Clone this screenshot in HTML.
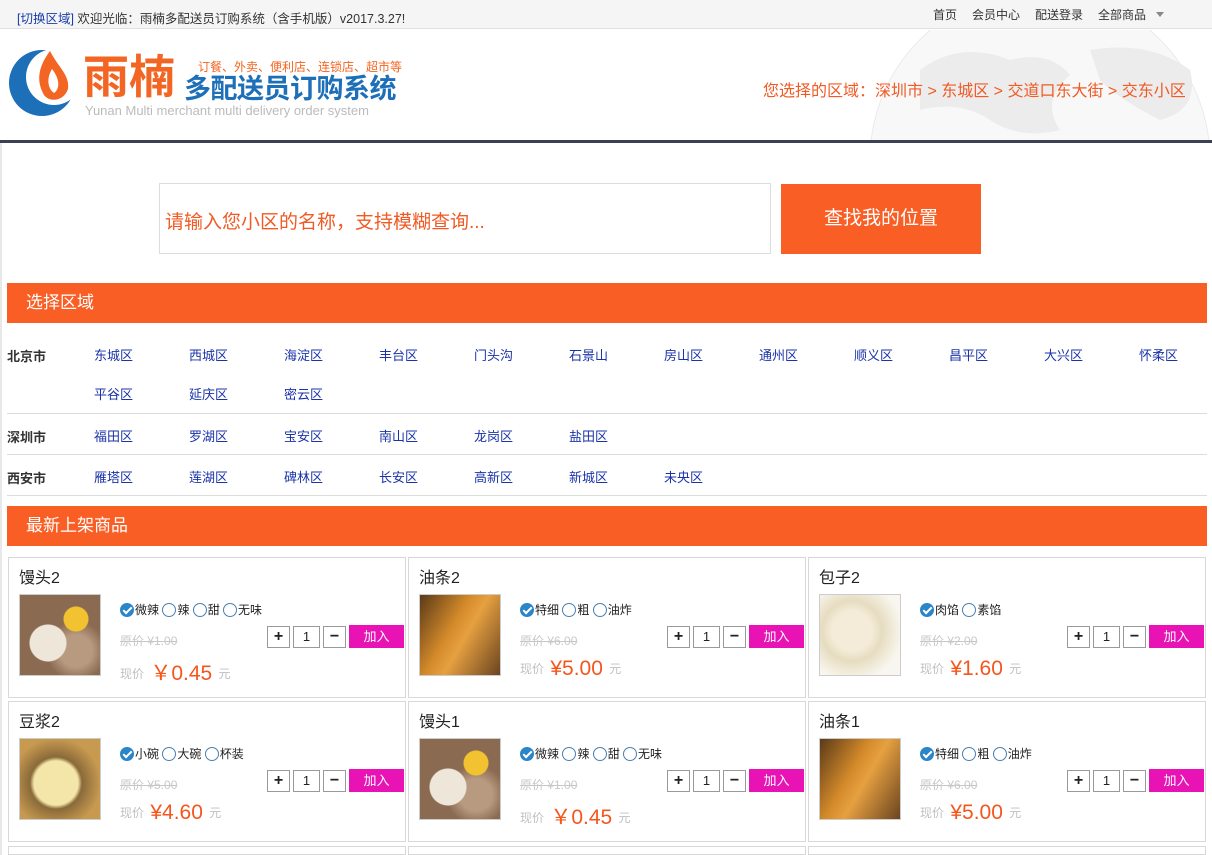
<!DOCTYPE html>
<html style="width:1212px;height:855px;overflow:hidden"><head><meta charset="utf-8"><style>
*{margin:0;padding:0;box-sizing:border-box}
body{width:1212px;height:855px;overflow:hidden;background:#fff;font-family:"Liberation Sans","Noto Sans CJK SC",sans-serif;font-size:12px;color:#333;position:relative}
.a{position:absolute;white-space:nowrap}
.top{left:0;top:0;width:1212px;height:29px;background:#f5f5f5;border-bottom:1px solid #e0e0e0}
.org{background:#f95e25;color:#fff;font-size:17px;line-height:40px;padding-left:19px}
.city{font-weight:bold;font-size:13px;color:#333}
.d{color:#1a33a8;font-size:13px}
.hr{height:1px;background:#dcdcdc}
.card{position:absolute;width:398px;height:141px;border:1px solid #d8d8d8;background:#fff}
.card .t{position:absolute;left:10px;top:6px;font-size:16px;color:#222}
.card .img{position:absolute;left:10px;top:36px;width:82px;height:82px;border:1px solid #ccc}
.card .op{position:absolute;left:111px;top:43px;font-size:12px;color:#222;white-space:nowrap}
.rd{display:inline-block;width:14px;height:14px;border:1px solid #4a7fb0;border-radius:50%;vertical-align:-3px;margin-right:1px;background:#fff}
.rd.on{background:#2b85c8;border-color:#2b85c8;position:relative}
.rd.on:after{content:"";position:absolute;left:4px;top:1px;width:3px;height:7px;border:solid #fff;border-width:0 2px 2px 0;transform:rotate(45deg)}
.card .yp{position:absolute;left:111px;top:74px;color:#c8c8c8;font-size:12px;text-decoration:line-through}
.card .xp{position:absolute;left:111px;top:99px;color:#c0c0c0;font-size:12px;white-space:nowrap}
.xp b{color:#f4561c;font-size:21px;font-weight:normal;margin:0 3px;vertical-align:-2px}
.btn{position:absolute;top:68px;height:22px;border:1px solid #999;background:#fff;text-align:center;line-height:20px;font-size:16px;font-weight:bold;color:#222}
.add{position:absolute;left:340px;top:67px;width:55px;height:23px;background:#e812b5;color:#fff;text-align:center;line-height:23px;font-size:13px}
</style></head><body>
<div class="a top"></div>
<div class="a" style="left:17px;top:8px;font-size:12.5px;color:#333"><span style="color:#1a3ca8">[切换区域]</span> 欢迎光临：雨楠多配送员订购系统（含手机版）v2017.3.27!</div>
<div class="a" style="left:933px;top:6px;font-size:12px;color:#333">首页</div>
<div class="a" style="left:972px;top:6px;font-size:12px">会员中心</div>
<div class="a" style="left:1035px;top:6px;font-size:12px">配送登录</div>
<div class="a" style="left:1098px;top:6px;font-size:12px">全部商品</div>
<div class="a" style="left:1156px;top:12px;width:0;height:0;border:4px solid transparent;border-top:5px solid #888"></div>
<!-- globe -->
<svg class="a" style="left:860px;top:30px" width="352" height="111"><circle cx="180" cy="130" r="170" fill="#f8f8f8" stroke="#eaeaea"/><path d="M60 40 Q100 10 150 30 Q190 20 210 45 Q180 70 200 100 Q160 110 130 90 Q100 70 60 80Z M230 20 Q290 10 330 40 Q340 80 300 90 Q260 70 240 50Z" fill="#ececec"/></svg>
<!-- logo -->
<svg class="a" style="left:8px;top:45px" width="70" height="72"><circle cx="34" cy="38" r="33" fill="#1d6fb8"/><circle cx="46" cy="32" r="28" fill="#fff"/><path d="M42 6 C30 22 28 36 36 50 C42 58 56 56 60 44 C62 30 50 22 42 6Z" fill="#f26522"/><path d="M44 24 C38 34 40 44 46 48 C52 44 52 34 44 24Z" fill="#fff"/></svg>
<div class="a" style="left:83px;top:50px;font-size:46px;line-height:54px;color:#f26522;font-weight:bold">雨楠</div>
<div class="a" style="left:198px;top:58px;font-size:12px;color:#f26522">订餐、外卖、便利店、连锁店、超市等</div>
<div class="a" style="left:184px;top:73px;font-size:27px;line-height:32px;color:#1d6fb8;font-weight:bold;letter-spacing:-0.5px">多配送员订购系统</div>
<div class="a" style="left:85px;top:103px;font-size:13px;color:#bbb">Yunan Multi merchant multi delivery order system</div>
<div class="a" style="left:763px;top:77px;font-size:16px;color:#f05a24">您选择的区域：深圳市 &gt; 东城区 &gt; 交道口东大街 &gt; 交东小区</div>
<div class="a" style="left:0;top:140px;width:1212px;height:3px;background:#3b4055"></div>
<div class="a" style="left:0;top:143px;width:2px;height:712px;background:#e8e8e8"></div>
<!-- search -->
<div class="a" style="left:159px;top:183px;width:612px;height:71px;border:1px solid #ddd"></div>
<div class="a" style="left:165px;top:207px;font-size:19px;color:#f05a24">请输入您小区的名称，支持模糊查询...</div>
<div class="a" style="left:781px;top:184px;width:200px;height:70px;background:#f95e25;color:#fff;font-size:19px;line-height:70px;text-align:center">查找我的位置</div>
<div class="a org" style="left:7px;top:283px;width:1200px;height:40px">选择区域</div>
<div class="a city" style="left:7px;top:346px">北京市</div>
<div class="a city" style="left:7px;top:427px">深圳市</div>
<div class="a city" style="left:7px;top:468px">西安市</div>
<div class="a hr" style="left:7px;top:413px;width:1200px"></div>
<div class="a hr" style="left:7px;top:454px;width:1200px"></div>
<div class="a hr" style="left:7px;top:495px;width:1200px"></div>
<div class="a d" style="left:94px;top:345px">
<span class="a" style="left:0">东城区</span><span class="a" style="left:95px">西城区</span><span class="a" style="left:190px">海淀区</span><span class="a" style="left:285px">丰台区</span><span class="a" style="left:380px">门头沟</span><span class="a" style="left:475px">石景山</span><span class="a" style="left:570px">房山区</span><span class="a" style="left:665px">通州区</span><span class="a" style="left:760px">顺义区</span><span class="a" style="left:855px">昌平区</span><span class="a" style="left:950px">大兴区</span><span class="a" style="left:1045px">怀柔区</span>
<span class="a" style="left:0;top:39px">平谷区</span><span class="a" style="left:95px;top:39px">延庆区</span><span class="a" style="left:190px;top:39px">密云区</span>
<span class="a" style="left:0;top:81px">福田区</span><span class="a" style="left:95px;top:81px">罗湖区</span><span class="a" style="left:190px;top:81px">宝安区</span><span class="a" style="left:285px;top:81px">南山区</span><span class="a" style="left:380px;top:81px">龙岗区</span><span class="a" style="left:475px;top:81px">盐田区</span>
<span class="a" style="left:0;top:122px">雁塔区</span><span class="a" style="left:95px;top:122px">莲湖区</span><span class="a" style="left:190px;top:122px">碑林区</span><span class="a" style="left:285px;top:122px">长安区</span><span class="a" style="left:380px;top:122px">高新区</span><span class="a" style="left:475px;top:122px">新城区</span><span class="a" style="left:570px;top:122px">未央区</span>
</div>
<div class="a org" style="left:7px;top:506px;width:1200px;height:40px">最新上架商品</div>

<div class="card" style="left:8px;top:557px"><div class="t">馒头2</div><div class="img" style="background:radial-gradient(circle at 70% 30%,#f2c230 0 12px,transparent 13px),radial-gradient(circle at 35% 60%,#eee6d8 0 18px,transparent 19px),radial-gradient(circle at 70% 70%,#b89a80 0 16px,#8a6a50 30px)"></div>
<div class="op"><i class="rd on"></i>微辣 <i class="rd"></i>辣 <i class="rd"></i>甜 <i class="rd"></i>无味</div>
<div class="yp">原价 ¥1.00</div><div class="xp">现价 <b>￥0.45</b> 元</div>
<div class="btn" style="left:258px;width:23px">+</div><div class="btn" style="left:284px;width:27px;font-weight:normal;font-size:13px">1</div><div class="btn" style="left:314px;width:23px">−</div><div class="add">加入</div></div>

<div class="card" style="left:408px;top:557px"><div class="t">油条2</div><div class="img" style="background:linear-gradient(120deg,#5a3a18,#d48a2a 40%,#e6a040 55%,#6a4420)"></div>
<div class="op"><i class="rd on"></i>特细 <i class="rd"></i>粗 <i class="rd"></i>油炸</div>
<div class="yp">原价 ¥6.00</div><div class="xp">现价 <b>¥5.00</b> 元</div>
<div class="btn" style="left:258px;width:23px">+</div><div class="btn" style="left:284px;width:27px;font-weight:normal;font-size:13px">1</div><div class="btn" style="left:314px;width:23px">−</div><div class="add">加入</div></div>

<div class="card" style="left:808px;top:557px"><div class="t">包子2</div><div class="img" style="background:radial-gradient(circle at 40% 45%,#f4ecd8 0 20px,#e6dcc0 30px,#f8f6ee 50px)"></div>
<div class="op"><i class="rd on"></i>肉馅 <i class="rd"></i>素馅</div>
<div class="yp">原价 ¥2.00</div><div class="xp">现价 <b>¥1.60</b> 元</div>
<div class="btn" style="left:258px;width:23px">+</div><div class="btn" style="left:284px;width:27px;font-weight:normal;font-size:13px">1</div><div class="btn" style="left:314px;width:23px">−</div><div class="add">加入</div></div>

<div class="card" style="left:8px;top:701px"><div class="t">豆浆2</div><div class="img" style="background:radial-gradient(ellipse at 45% 55%,#f4e6a8 0 22px,#8a6a3a 26px,#c89a50 45px)"></div>
<div class="op"><i class="rd on"></i>小碗 <i class="rd"></i>大碗 <i class="rd"></i>杯装</div>
<div class="yp">原价 ¥5.00</div><div class="xp">现价 <b>¥4.60</b> 元</div>
<div class="btn" style="left:258px;width:23px">+</div><div class="btn" style="left:284px;width:27px;font-weight:normal;font-size:13px">1</div><div class="btn" style="left:314px;width:23px">−</div><div class="add">加入</div></div>

<div class="card" style="left:408px;top:701px"><div class="t">馒头1</div><div class="img" style="background:radial-gradient(circle at 70% 30%,#f2c230 0 12px,transparent 13px),radial-gradient(circle at 35% 60%,#eee6d8 0 18px,transparent 19px),radial-gradient(circle at 70% 70%,#b89a80 0 16px,#8a6a50 30px)"></div>
<div class="op"><i class="rd on"></i>微辣 <i class="rd"></i>辣 <i class="rd"></i>甜 <i class="rd"></i>无味</div>
<div class="yp">原价 ¥1.00</div><div class="xp">现价 <b>￥0.45</b> 元</div>
<div class="btn" style="left:258px;width:23px">+</div><div class="btn" style="left:284px;width:27px;font-weight:normal;font-size:13px">1</div><div class="btn" style="left:314px;width:23px">−</div><div class="add">加入</div></div>

<div class="card" style="left:808px;top:701px"><div class="t">油条1</div><div class="img" style="background:linear-gradient(120deg,#5a3a18,#d48a2a 40%,#e6a040 55%,#6a4420)"></div>
<div class="op"><i class="rd on"></i>特细 <i class="rd"></i>粗 <i class="rd"></i>油炸</div>
<div class="yp">原价 ¥6.00</div><div class="xp">现价 <b>¥5.00</b> 元</div>
<div class="btn" style="left:258px;width:23px">+</div><div class="btn" style="left:284px;width:27px;font-weight:normal;font-size:13px">1</div><div class="btn" style="left:314px;width:23px">−</div><div class="add">加入</div></div>

<div class="card" style="left:8px;top:846px;height:9px"></div><div class="card" style="left:408px;top:846px;height:9px"></div><div class="card" style="left:808px;top:846px;height:9px"></div>
</body></html>
